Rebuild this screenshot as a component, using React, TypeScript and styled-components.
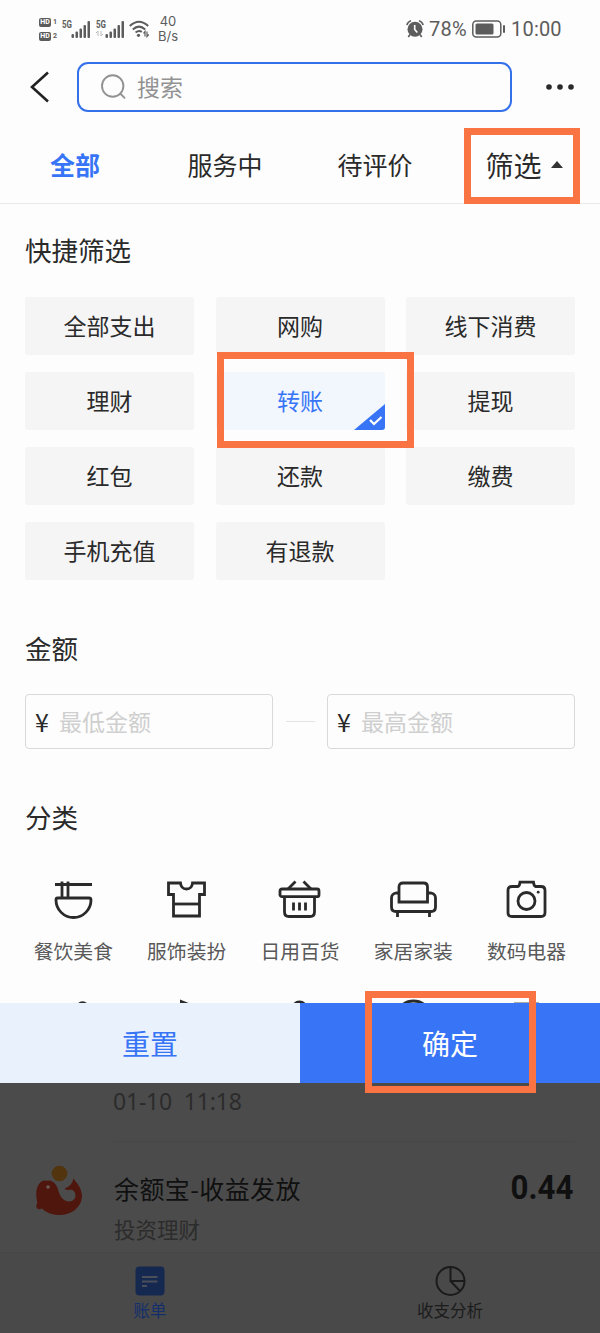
import React from "react";
import styled, { createGlobalStyle } from "styled-components";

const CJK = `"Noto Sans CJK SC", sans-serif`;
const BLUE = "#3875f6";

const GlobalStyle = createGlobalStyle`
  *, *::before, *::after { box-sizing: border-box; }
  body { margin: 0; background: #fdfdfd; }
  button, input { font: inherit; color: inherit; border: 0; padding: 0; margin: 0; background: none; outline: none; }
  svg { display: block; flex: none; }
`;

const Page = styled.div`
  width: 600px;
  height: 1333px;
  display: flex;
  flex-direction: column;
  overflow: hidden;
  background: #fdfdfd;
  color: #2a2a2a;
  font-family: ${CJK};
`;

/* Status bar */
const StatusBar = styled.div`
  height: 58px;
  flex: none;
  display: flex;
  align-items: center;
  justify-content: space-between;
  padding: 0 39px;
  color: #5c5c5c;
`;
const StatusGroup = styled.div`
  display: flex;
  align-items: center;
`;
const HdStack = styled.div`
  display: flex;
  flex-direction: column;
  gap: 5px;
  margin-right: 4px;
`;
const HdRow = styled.div`
  display: flex;
  align-items: center;
  gap: 2px;
  font: 700 7px/9px Roboto, sans-serif;
`;
const HdTag = styled.span`
  width: 12px;
  height: 9px;
  border-radius: 2px;
  background: #5c5c5c;
  color: #fff;
  text-align: center;
`;
const NetRate = styled.div`
  width: 24px;
  margin-left: 6px;
  text-align: center;
  font: 400 13px/15px Inter, sans-serif;
`;
const StatusText = styled.span<{ $w: number; $gap: number }>`
  width: ${(p) => p.$w}px;
  margin-left: ${(p) => p.$gap}px;
  font: 400 20px/24px Roboto, sans-serif;
  letter-spacing: 0.2px;
  white-space: nowrap;
`;

/* Search header */
const Header = styled.header`
  height: 70px;
  flex: none;
  display: flex;
  align-items: flex-start;
  padding: 4px 25px 0 29px;
`;
const IconButton = styled.button<{ $w: number }>`
  width: ${(p) => p.$w}px;
  height: 49px;
  display: flex;
  align-items: center;
`;
const SearchBox = styled.label`
  width: 435px;
  height: 50px;
  margin-right: 34px;
  display: flex;
  align-items: center;
  gap: 10px;
  padding-left: 22px;
  border: 2px solid #3470ea;
  border-radius: 11px;
  color: #929292;
  font-size: 23px;
`;
const SearchHint = styled.span`
  line-height: 30px;
  padding-bottom: 2px;
`;

/* Tabs */
const Tabs = styled.nav`
  height: 76px;
  flex: none;
  display: grid;
  grid-template-columns: repeat(4, 150px);
  border-bottom: 1px solid #e9e9e9;
`;
const Tab = styled.button<{ $active?: boolean; $large?: boolean }>`
  position: relative;
  display: flex;
  align-items: center;
  justify-content: center;
  gap: 9px;
  padding: ${(p) => (p.$large ? "0 2px 2px 0" : "0 0 3px")};
  font-size: ${(p) => (p.$large ? 28 : 25)}px;
  line-height: 36px;
  font-weight: ${(p) => (p.$active ? 700 : 400)};
  color: ${(p) => (p.$active ? BLUE : "#2a2a2a")};
`;
const Marker = styled.span<{ $t: number; $l: number; $w: number; $h: number }>`
  position: absolute;
  z-index: 2;
  top: ${(p) => p.$t}px;
  left: ${(p) => p.$l}px;
  width: ${(p) => p.$w}px;
  height: ${(p) => p.$h}px;
  border: 7px solid #fa7343;
  pointer-events: none;
`;

/* Filter panel */
const Panel = styled.main`
  height: 799px;
  flex: none;
  overflow: hidden;
  padding: 26px 25px 0;
`;
const SectionTitle = styled.h2`
  margin: 0;
  font-size: 26.5px;
  line-height: 40px;
  font-weight: 400;
`;
const ChipGrid = styled.div`
  display: grid;
  grid-template-columns: repeat(3, 169px);
  grid-auto-rows: 58px;
  justify-content: space-between;
  row-gap: 17px;
  margin: 27px 0 48px;
`;
const Chip = styled.button<{ $selected?: boolean }>`
  position: relative;
  border-radius: 3px;
  font-size: 23px;
  line-height: 56px;
  padding-bottom: 2px;
  background: ${(p) => (p.$selected ? "#f2f7fe" : "#f5f5f5")};
  color: ${(p) => (p.$selected ? BLUE : "#2a2a2a")};
`;
const ChipCheck = styled.span`
  position: absolute;
  right: 0;
  bottom: 0;
`;
const AmountRow = styled.div`
  display: flex;
  align-items: center;
  justify-content: space-between;
  margin: 26px 0 48px;
`;
const AmountField = styled.label`
  width: 248px;
  height: 55px;
  display: flex;
  align-items: center;
  padding: 0 0 2px 9px;
  border: 1px solid #d9d9d9;
  border-radius: 4px;
  font-size: 23px;
`;
const Yen = styled.span`
  width: 24px;
  font-size: 25px;
  line-height: 32px;
`;
const Hint = styled.span`
  line-height: 32px;
  color: #cfcfcf;
`;
const Dash = styled.span`
  width: 29px;
  height: 1px;
  background: #e3e3e3;
`;
const CategoryGrid = styled.div`
  display: grid;
  grid-template-columns: repeat(5, 113.3px);
  grid-auto-rows: 119px;
  margin: 43px -8.3px 0;
`;
const Category = styled.div`
  display: flex;
  flex-direction: column;
  align-items: center;
  font-size: 19.8px;
  line-height: 30px;
  color: #595959;
  gap: 16px;
`;

/* Actions */
const Actions = styled.div`
  height: 80px;
  flex: none;
  display: grid;
  grid-template-columns: 1fr 1fr;
`;
const Action = styled.button<{ $primary?: boolean }>`
  position: relative;
  font-size: 28px;
  line-height: 80px;
  background: ${(p) => (p.$primary ? BLUE : "#e9f1fd")};
  color: ${(p) => (p.$primary ? "#fff" : BLUE)};
`;

/* Dimmed list behind the panel */
const Dimmed = styled.section`
  flex: 1;
  display: flex;
  flex-direction: column;
  background: #4b4b4b;
`;
const DateLine = styled.div`
  height: 59px;
  margin: 0 25px 0 113px;
  padding-top: 4px;
  border-bottom: 1px solid #474747;
  font: 400 23px/28px "Noto Sans", sans-serif;
  letter-spacing: -0.2px;
  word-spacing: 6px;
  color: #2b2b2b;
`;
const Bill = styled.div`
  height: 110px;
  display: flex;
  padding: 22px 27px 0 35px;
`;
const BillText = styled.div`
  flex: 1;
  margin-left: 31px;
`;
const BillTitle = styled.div`
  font-size: 25px;
  letter-spacing: 0.4px;
  line-height: 48px;
  color: #101010;
`;
const BillKind = styled.div`
  font-size: 21.5px;
  line-height: 34px;
  color: #2c2c2c;
`;
const BillAmount = styled.div`
  font: 700 34px/46px Roboto, sans-serif;
  color: #101010;
  transform: scaleX(0.92);
  transform-origin: right;
`;
const BottomNav = styled.nav`
  flex: 1;
  display: grid;
  grid-template-columns: 1fr 1fr;
  border-top: 1px solid #474747;
  background: #494949;
`;
const NavItem = styled.div<{ $active?: boolean }>`
  display: flex;
  flex-direction: column;
  align-items: center;
  padding-top: 12px;
  font-size: 16.5px;
  line-height: 28px;
  color: ${(p) => (p.$active ? "#142f6b" : "#1c1c1c")};
`;

const Signal = ({ transfer }: { transfer?: boolean }) => (
  <svg width="34" height="24" viewBox="0 0 34 24" fill="#5c5c5c">
    <text x="1" y="11" fontFamily="Roboto" fontWeight="700" fontSize="10.5" textLength="10" lengthAdjust="spacingAndGlyphs">
      5G
    </text>
    {transfer && (
      <path d="M3 19v-5l-2 2M6 14v5l2-2" fill="none" stroke="#bbb" strokeWidth="1" />
    )}
    <rect x="10.500" y="17" width="2.500" height="4" rx="1" />
    <rect x="14.500" y="14.500" width="2.500" height="6.500" rx="1" />
    <rect x="18.500" y="11.500" width="2.500" height="9.500" rx="1" />
    <rect x="22.500" y="8" width="2.500" height="13" rx="1" />
    <rect x="26.500" y="4" width="2.500" height="17" rx="1" />
  </svg>
);

const Wifi = () => (
  <svg width="21" height="18" viewBox="0 0 21 18" fill="none" stroke="#5c5c5c" strokeWidth="2">
    <path d="M.8 6Q10 -2.500 19.200 6M3.800 9.500Q10 3.700 16.200 9.500M6.600 12.600Q10 9.800 12.800 12" />
    <circle cx="9.500" cy="15.300" r="1.600" fill="#5c5c5c" stroke="none" />
    <path d="M16 16.500v-5l-1.500 1.800M18 11.500v5l1.800-2" strokeWidth="1.200" />
  </svg>
);

const Alarm = () => (
  <svg width="18" height="18" viewBox="0 0 18 18" fill="none" stroke="#5c5c5c">
    <circle cx="9" cy="9.300" r="7.500" fill="#5c5c5c" stroke="none" />
    <path d="M.8 5Q2 1.600 5 .8M17.200 5Q16 1.600 13 .8M4 14.500L2.300 17M14 14.500L15.700 17" strokeWidth="1.600" />
    <path d="M8.700 5v4.500l2.600 3" stroke="#fff" strokeWidth="1.600" />
  </svg>
);

const Battery = () => (
  <svg width="34" height="18" viewBox="0 0 34 18">
    <rect x=".8" y="1" width="28" height="16" rx="3.500" fill="none" stroke="#5c5c5c" strokeWidth="1.500" />
    <rect x="3.500" y="3.500" width="18" height="11" rx="1.500" fill="#5c5c5c" />
    <rect x="31" y="5" width="2" height="8" rx="1" fill="#5c5c5c" />
  </svg>
);

const glyphs: Record<string, React.ReactNode> = {
  bowl: (
    <>
      <path d="M6 4.500H43M13 1.500V17M19 1.500V17" />
      <path d="M8.500 18H40Q42 18 42 20A17.500 17.500 0 0 1 7 20Q7 18 8.500 18Z" />
    </>
  ),
  shirt: (
    <>
      <path d="M6.500 3H18.500Q19 9 24.500 9Q30 9 30.500 3H42.500V14.500H37.500V36H11.500V14.500H6.500Z" />
      <path d="M11.500 24H37.500" />
    </>
  ),
  basket: (
    <>
      <path d="M20.500 1.500L13 9M28.500 1.500L36 9" />
      <rect x="5" y="9" width="39" height="7.700" rx="2" />
      <path d="M9.500 17V32Q9.500 36.500 14 36.500H35Q39.500 36.500 39.500 32V17" />
      <path d="M18.500 22.500V30.500M24.500 22.500V30.500M30.500 22.500V30.500" />
    </>
  ),
  sofa: (
    <>
      <path d="M10 22V7Q10 3 14 3H34.500Q38.500 3 38.500 7V22Z" />
      <path d="M9.500 13H7Q2.500 14 2.500 18V27Q2.500 31.500 7 31.500H42Q46.500 31.500 46.500 27V18Q46.500 14 42 13H39" />
      <path d="M8.500 31.500V37M40.500 31.500V37" />
    </>
  ),
  camera: (
    <>
      <path d="M10 6.500H16Q17.500 6 18 2.200H31.500Q32 6 33.500 6.500H39Q43 6.500 43 10.500V32.500Q43 36.500 39 36.500H10Q6 36.500 6 32.500V10.500Q6 6.500 10 6.500Z" />
      <circle cx="24.500" cy="21" r="8.500" />
      <circle cx="36.200" cy="12.200" r="1.400" fill="#2a2a2a" stroke="none" />
    </>
  ),
  drop: <circle cx="33.500" cy="8.700" r="5" />,
  flag: <path d="M18 0.500L29 5L18 9Z" fill="#2a2a2a" stroke="none" />,
  person: <circle cx="24.500" cy="10" r="7" />,
  ring: <circle cx="24.500" cy="20" r="18" />,
  book: <path d="M12 5H37" />,
};

const CategoryIcon = ({ name }: { name: string }) => (
  <svg width="49" height="40" viewBox="0 0 49 40" fill="none" stroke="#2a2a2a" strokeWidth="2.800">
    {glyphs[name]}
  </svg>
);

const chips = ["全部支出", "网购", "线下消费", "理财", "转账", "提现", "红包", "还款", "缴费", "手机充值", "有退款"];
const categories = [
  ["bowl", "餐饮美食"],
  ["shirt", "服饰装扮"],
  ["basket", "日用百货"],
  ["sofa", "家居家装"],
  ["camera", "数码电器"],
  ["drop", ""],
  ["flag", ""],
  ["person", ""],
  ["ring", ""],
  ["book", ""],
];

export default function App() {
  return (
    <Page>
      <GlobalStyle />
      <StatusBar>
        <StatusGroup>
          <HdStack>
            <HdRow><HdTag>HD</HdTag>1</HdRow>
            <HdRow><HdTag>HD</HdTag>2</HdRow>
          </HdStack>
          <Signal />
          <Signal transfer />
          <Wifi />
          <NetRate>40<br />B/s</NetRate>
        </StatusGroup>
        <StatusGroup>
          <Alarm />
          <StatusText $w={43} $gap={5}>78%</StatusText>
          <Battery />
          <StatusText $w={50} $gap={5}>10:00</StatusText>
        </StatusGroup>
      </StatusBar>

      <Header>
        <IconButton $w={48} aria-label="返回">
          <svg width="20" height="32" viewBox="0 0 20 32" fill="none" stroke="#222" strokeWidth="2.600">
            <path d="M19 1.500L3 16L19 30.500" />
          </svg>
        </IconButton>
        <SearchBox>
          <svg width="26" height="26" viewBox="0 0 26 26" fill="none" stroke="#929292" strokeWidth="1.900">
            <circle cx="11.700" cy="12" r="10.700" />
            <path d="M18.700 19L24 24.300" />
          </svg>
          <SearchHint>搜索</SearchHint>
        </SearchBox>
        <IconButton $w={29} aria-label="更多">
          <svg width="29" height="6" viewBox="0 0 29 6" fill="#2a2a2a">
            <circle cx="3" cy="3" r="2.800" />
            <circle cx="14" cy="3" r="2.800" />
            <circle cx="25" cy="3" r="2.800" />
          </svg>
        </IconButton>
      </Header>

      <Tabs>
        <Tab $active>全部</Tab>
        <Tab>服务中</Tab>
        <Tab>待评价</Tab>
        <Tab $large>
          筛选
          <svg width="12" height="7" viewBox="0 0 12 7"><path d="M6 0L12 7H0Z" fill="#333" /></svg>
          <Marker $t={0} $l={14} $w={116} $h={76} />
        </Tab>
      </Tabs>

      <Panel>
        <SectionTitle>快捷筛选</SectionTitle>
        <ChipGrid>
          {chips.map((label) => (
            <Chip key={label} $selected={label === "转账"}>
              {label}
              {label === "转账" && (
                <>
                  <ChipCheck>
                    <svg width="31" height="26" viewBox="0 0 31 26">
                      <path d="M31 0V23Q31 26 28 26H0Z" fill={BLUE} />
                      <path d="M16 16L20 20L27.500 13" fill="none" stroke="#fff" strokeWidth="2.200" />
                    </svg>
                  </ChipCheck>
                  <Marker $t={-20} $l={1} $w={197} $h={96} />
                </>
              )}
            </Chip>
          ))}
        </ChipGrid>

        <SectionTitle>金额</SectionTitle>
        <AmountRow>
          <AmountField><Yen>¥</Yen><Hint>最低金额</Hint></AmountField>
          <Dash />
          <AmountField><Yen>¥</Yen><Hint>最高金额</Hint></AmountField>
        </AmountRow>

        <SectionTitle>分类</SectionTitle>
        <CategoryGrid>
          {categories.map(([icon, label]) => (
            <Category key={icon}>
              <CategoryIcon name={icon} />
              {label}
            </Category>
          ))}
        </CategoryGrid>
      </Panel>

      <Actions>
        <Action>重置</Action>
        <Action $primary>
          确定
          <Marker $t={-12} $l={65} $w={171} $h={102} />
        </Action>
      </Actions>

      <Dimmed>
        <DateLine>01-10 11:18</DateLine>
        <Bill>
          <svg width="48" height="52" viewBox="0 0 48 52">
            <circle cx="24.500" cy="9.500" r="7.800" fill="#52340f" />
            <path d="M1.200 31C1.200 22 5 16.500 10 16.500Q12 17 14 16.500C19 17 22 21 23.500 27C25 33 29 37.500 34 37.500C38 37.500 40.500 34.500 40.500 31.500C40.500 28 38 26 35.500 25.600Q32 27 29.500 24.500Q37 22 38.500 14.500Q41 18 43 20.500Q47 26 47 33C46 44 36 51 24.500 51C17 51 11 48.500 7 44.500C4 46.500 .5 44.500 1.500 41Q3 39 1.800 36Z" fill="#4f160d" />
            <circle cx="13" cy="23" r="1.800" fill="#6b5a56" />
          </svg>
          <BillText>
            <BillTitle>余额宝-收益发放</BillTitle>
            <BillKind>投资理财</BillKind>
          </BillText>
          <BillAmount>0.44</BillAmount>
        </Bill>
        <BottomNav>
          <NavItem $active>
            <svg width="30" height="31" viewBox="0 0 30 31">
              <rect x=".5" y="1.500" width="29" height="29" rx="4" fill="#142850" />
              <path d="M7 12H22.500M7 16.500H22.500M7 21H12" stroke="#4b4f59" strokeWidth="2" />
            </svg>
            账单
          </NavItem>
          <NavItem>
            <svg width="31" height="31" viewBox="0 0 31 31" fill="none" stroke="#1b1b1b" strokeWidth="2">
              <circle cx="15.500" cy="16" r="14" />
              <path d="M15.500 2V16H29.500M15.500 16L25 26" />
            </svg>
            收支分析
          </NavItem>
        </BottomNav>
      </Dimmed>
    </Page>
  );
}
